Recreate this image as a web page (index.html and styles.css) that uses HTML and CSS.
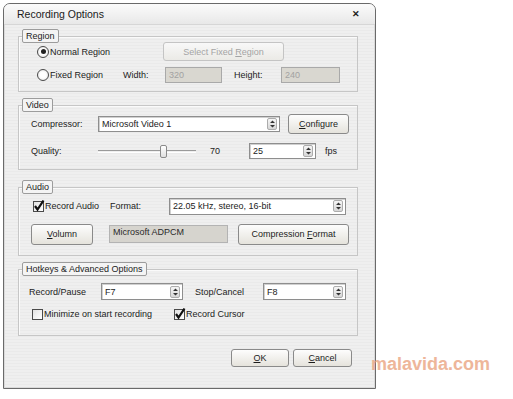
FILE: index.html
```html
<!DOCTYPE html>
<html lang="en">
<head>
    <meta charset="UTF-8">
    <title>Recording Options</title>
    <link rel="stylesheet" href="styles.css">
</head>
<body>
    <div class="window">
        <div class="titlebar">
            <span class="title">Recording Options</span>
            <span class="close">✕</span>
        </div>

        <div class="content">
            <div class="group">
                <div class="legend">Region</div>
                <div class="box box-region">
                    <div class="row row-r1">
                        <span class="option w-normal"><span class="radio checked"></span>Normal Region</span>
                        <span class="btn disabled w-select"><span>Select Fixed <u>R</u>egion</span></span>
                    </div>
                    <div class="row row-r2">
                        <span class="option w-fixed"><span class="radio"></span>Fixed Region</span>
                        <span class="lbl w-width">Width:</span>
                        <span class="field disabled w-wval">320</span>
                        <span class="lbl w-height">Height:</span>
                        <span class="field disabled w-hval">240</span>
                    </div>
                </div>
            </div>

            <div class="group group-video">
                <div class="legend">Video</div>
                <div class="box box-video">
                    <div class="row row-v1">
                        <span class="lbl w-vlabel">Compressor:</span>
                        <span class="combo w-compressor">Microsoft Video 1<span class="spin"><svg viewBox="0 0 7 10" width="7" height="10"><path d="M1 4 L3.5 1.5 L6 4 Z M1 6 L3.5 8.5 L6 6 Z" fill="#333"/></svg></span></span>
                        <span class="btn w-configure"><span><u>C</u>onfigure</span></span>
                    </div>
                    <div class="row row-v2">
                        <span class="lbl w-vlabel">Quality:</span>
                        <span class="slider">
                            <span class="track track-left"></span>
                            <span class="thumb"></span>
                            <span class="track"></span>
                        </span>
                        <span class="lbl w-value">70</span>
                        <span class="combo w-fps">25<span class="spin"><svg viewBox="0 0 7 10" width="7" height="10"><path d="M1 4 L3.5 1.5 L6 4 Z M1 6 L3.5 8.5 L6 6 Z" fill="#333"/></svg></span></span>
                        <span class="lbl fps">fps</span>
                    </div>
                </div>
            </div>

            <div class="group group-audio">
                <div class="legend">Audio</div>
                <div class="box box-audio">
                    <div class="row row-a1">
                        <span class="option w-record"><span class="check checked"><svg viewBox="0 0 11 11" width="11" height="11"><path d="M2 5 L4.5 8.5 L10.5 -0.5" stroke="#111" stroke-width="2.2" fill="none"/></svg></span>Record Audio</span>
                        <span class="lbl w-format">Format:</span>
                        <span class="combo w-formatval">22.05 kHz, stereo, 16-bit<span class="spin"><svg viewBox="0 0 7 10" width="7" height="10"><path d="M1 4 L3.5 1.5 L6 4 Z M1 6 L3.5 8.5 L6 6 Z" fill="#333"/></svg></span></span>
                    </div>
                    <div class="row row-a2">
                        <span class="btn w-volumn"><span><u>V</u>olumn</span></span>
                        <span class="field readonly w-codec">Microsoft ADPCM</span>
                        <span class="btn w-compression"><span>Compression <u>F</u>ormat</span></span>
                    </div>
                </div>
            </div>

            <div class="group group-hotkeys">
                <div class="legend">Hotkeys &amp; Advanced Options</div>
                <div class="box box-hotkeys">
                    <div class="row row-h1">
                        <span class="lbl w-rec">Record/Pause</span>
                        <span class="combo w-f7">F7<span class="spin"><svg viewBox="0 0 7 10" width="7" height="10"><path d="M1 4 L3.5 1.5 L6 4 Z M1 6 L3.5 8.5 L6 6 Z" fill="#333"/></svg></span></span>
                        <span class="lbl w-stop">Stop/Cancel</span>
                        <span class="combo w-f8">F8<span class="spin"><svg viewBox="0 0 7 10" width="7" height="10"><path d="M1 4 L3.5 1.5 L6 4 Z M1 6 L3.5 8.5 L6 6 Z" fill="#333"/></svg></span></span>
                    </div>
                    <div class="row row-h2">
                        <span class="option w-minimize"><span class="check"></span>Minimize on start recording</span>
                        <span class="option"><span class="check checked"><svg viewBox="0 0 11 11" width="11" height="11"><path d="M2 5 L4.5 8.5 L10.5 -0.5" stroke="#111" stroke-width="2.2" fill="none"/></svg></span>Record Cursor</span>
                    </div>
                </div>
            </div>

            <div class="actions">
                <span class="btn w-ok"><span><u>O</u>K</span></span>
                <span class="btn w-cancel"><span><u>C</u>ancel</span></span>
            </div>
        </div>
    </div>

    <div class="watermark">malavida.com</div>
</body>
</html>
```

FILE: styles.css
```css
body {
    margin: 0;
    background-color: #fff;
    font-family: "Liberation Sans", Arial, sans-serif;
    font-size: 9px;
    color: #222;
}

.window {
    box-sizing: border-box;
    width: 373px;
    height: 386px;
    margin: 3px 0 0 3px;
    border: 1px solid #6a6a6a;
    border-radius: 7px 7px 0 0;
    background: repeating-linear-gradient(#efefef 0 2px, #eaeaea 2px 3px);
    box-shadow: inset 0 0 0 1px #dadada;
    overflow: hidden;
}

.titlebar {
    height: 20px;
    display: flex;
    align-items: center;
    justify-content: space-between;
    padding: 0 15px 0 13px;
    background: linear-gradient(#fbfbfb, #e8e8e8);
    border-bottom: 1px solid #d6d6d6;
}

.title {
    font-size: 10.5px;
    color: #1a1a1a;
}

.close {
    font-size: 9px;
    font-weight: bold;
    color: #222;
}

.content {
    padding: 4px 0 0 14px;
}

.group {
    width: 340px;
    display: flex;
    flex-direction: column;
    align-items: flex-start;
}

.group-video,
.group-hotkeys {
    margin-top: 6px;
}

.group-audio {
    margin-top: 10px;
}

.legend {
    position: relative;
    z-index: 1;
    height: 12px;
    line-height: 12px;
    margin-left: 4px;
    padding: 0 3px;
    border: 1px solid #9c9c9c;
    border-radius: 2px;
    background-color: #f4f4f4;
}

.box {
    align-self: stretch;
    margin-top: -7px;
    border: 1px solid #c6c6c6;
    box-shadow: inset 1px 1px 0 #fafafa;
    display: flex;
    flex-direction: column;
}

.box-region { padding: 5px 0 8px; gap: 6px; }
.box-video { padding: 8px 0 10px; gap: 9px; }
.box-audio { padding: 9px 0 10px; gap: 8px; }
.box-hotkeys { padding: 13px 0 13px; gap: 6px; }

.row {
    display: flex;
    align-items: center;
}

.row-r1 { height: 19px; padding-left: 18px; }
.row-r2 { height: 16px; padding-left: 18px; }
.row-v1 { height: 20px; padding-left: 12px; }
.row-v2 { height: 16px; padding-left: 12px; }
.row-a1 { height: 18px; padding-left: 14px; }
.row-a2 { height: 22px; padding-left: 12px; }
.row-h1 { height: 17px; padding-left: 10px; }
.row-h2 { height: 16px; padding-left: 13px; }

.option {
    display: flex;
    align-items: center;
    gap: 1px;
}

.radio {
    box-sizing: border-box;
    width: 12px;
    height: 12px;
    border: 1px solid #4a4a4a;
    border-radius: 50%;
    background: radial-gradient(#fff 40%, #dcdcdc);
    display: flex;
    align-items: center;
    justify-content: center;
}

.radio.checked::after {
    content: "";
    width: 5px;
    height: 5px;
    border-radius: 50%;
    background-color: #222;
}

.check {
    box-sizing: border-box;
    width: 11px;
    height: 11px;
    border: 1px solid #4a4a4a;
    background: linear-gradient(135deg, #e2e2e2, #fff);
    display: flex;
}

.check svg {
    overflow: visible;
    margin: -1px;
}

.btn {
    box-sizing: border-box;
    height: 100%;
    display: flex;
    align-items: center;
    justify-content: center;
    border: 1px solid #8a8a8a;
    border-radius: 3px;
    background: linear-gradient(#fdfdfd, #e5e3dc);
    color: #1c1c1c;
}

.btn.disabled {
    border-color: #c4c4c4;
    color: #a4a4a4;
    background: linear-gradient(#f8f8f8, #ebeae6);
}

.field {
    box-sizing: border-box;
    height: 100%;
    display: flex;
    align-items: center;
    padding-left: 3px;
    border: 1px solid #a9a9a9;
}

.field.disabled {
    background-color: #d9d7d0;
    color: #a2a2a2;
}

.field.readonly {
    height: 18px;
    background-color: #d6d4ce;
    border-color: #b3b3b3;
    color: #2a2a2a;
    align-items: flex-start;
    padding-top: 1px;
}

.combo {
    box-sizing: border-box;
    height: 16px;
    display: flex;
    align-items: center;
    padding-left: 3px;
    background-color: #fff;
    border: 1px solid #8e8e8e;
    box-shadow: inset 1px 1px 0 #d0d0d0;
}

.spin {
    box-sizing: border-box;
    margin-left: auto;
    margin-right: 2px;
    width: 10px;
    height: 12px;
    display: flex;
    align-items: center;
    justify-content: center;
    border: 1px solid #acacac;
    border-radius: 2px;
    background: linear-gradient(#f6f6f6, #d6d6d6);
}

.slider {
    width: 98px;
    display: flex;
    align-items: center;
}

.track {
    flex: 1;
    height: 1px;
    border-top: 1px solid #9a9a9a;
    border-bottom: 1px solid #fff;
}

.track-left {
    flex: 0 0 62px;
}

.thumb {
    box-sizing: border-box;
    width: 7px;
    height: 13px;
    border: 1px solid #8a8a8a;
    border-radius: 2px;
    background: linear-gradient(#fff, #e0e0e0);
}

.w-normal { width: 126px; }
.w-select { width: 121px; }
.w-fixed { width: 86px; }
.w-width { width: 42px; }
.w-wval { width: 57px; }
.w-height { width: 47px; margin-left: 12px; }
.w-hval { width: 59px; }

.w-vlabel { width: 67px; }
.w-compressor { width: 182px; }
.w-configure { width: 61px; margin-left: 8px; }
.w-value { width: 39px; margin-left: 14px; }
.w-fps { width: 67px; }
.fps { margin-left: 9px; }

.w-record { width: 77px; }
.w-format { width: 59px; }
.w-formatval { width: 177px; height: 17px; }
.w-volumn { width: 62px; height: 21px; }
.w-codec { width: 119px; margin-left: 16px; }
.w-compression { width: 111px; height: 21px; margin-left: 10px; }

.w-rec { width: 72px; }
.w-f7 { width: 82px; height: 17px; }
.w-stop { width: 68px; margin-left: 12px; }
.w-f8 { width: 83px; height: 17px; }
.w-minimize { width: 142px; }

.actions {
    width: 340px;
    height: 18px;
    margin-top: 13px;
    box-sizing: border-box;
    padding-right: 6px;
    display: flex;
    justify-content: flex-end;
    gap: 4px;
}

.w-ok { width: 58px; }
.w-cancel { width: 59px; }

.watermark {
    position: absolute;
    left: 371px;
    top: 354px;
    font-size: 18px;
    font-weight: bold;
    color: #eaa582;
    opacity: 0.8;
}
```
